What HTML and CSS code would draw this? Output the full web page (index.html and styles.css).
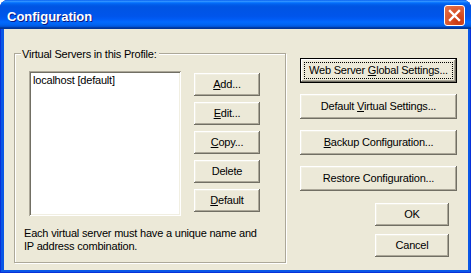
FILE: index.html
```html
<!DOCTYPE html>
<html lang="en">
<head>
    <meta charset="UTF-8">
    <title>Configuration</title>
    <link rel="stylesheet" href="styles.css">
</head>
<body>
    <div class="window">
        <div class="titlebar">
            <span class="title">Configuration</span>
            <button class="close" aria-label="Close">
                <svg width="13" height="13" viewBox="0 0 13 13">
                    <path d="M2 2 L11 11 M11 2 L2 11" stroke="#fff" stroke-width="2.4" stroke-linecap="square"/>
                </svg>
            </button>
        </div>

        <div class="client">
            <div class="group">
                <span class="legend">Virtual Servers in this Profile:</span>
                <div class="group-row">
                    <div class="listbox">
                        <div class="item">localhost [default]</div>
                    </div>
                    <div class="side-buttons">
                        <button class="btn small"><u>A</u>dd...</button>
                        <button class="btn small"><u>E</u>dit...</button>
                        <button class="btn small"><u>C</u>opy...</button>
                        <button class="btn small">Delete</button>
                        <button class="btn small"><u>D</u>efault</button>
                    </div>
                </div>
                <p class="note">Each virtual server must have a unique name and<br>IP address combination.</p>
            </div>

            <div class="actions">
                <div class="main-buttons">
                    <button class="btn wide default"><span class="focus">Web Server <u>G</u>lobal Settings...</span></button>
                    <button class="btn wide">Default <u>V</u>irtual Settings...</button>
                    <button class="btn wide"><u>B</u>ackup Configuration...</button>
                    <button class="btn wide">Restore Configuration...</button>
                </div>
                <div class="dialog-buttons">
                    <button class="btn dlg">OK</button>
                    <button class="btn dlg">Cancel</button>
                </div>
            </div>
        </div>
    </div>
</body>
</html>
```

FILE: styles.css
```css
body {
    margin: 0;
    background: #fff;
    font-family: "Liberation Sans", Arial, sans-serif;
}
.window {
    width: 471px;
    height: 273px;
    background: #0a57e6;
    border-radius: 8px 8px 0 0;
    box-sizing: border-box;
    box-shadow: inset 1px 0 #0831d9, inset -1px 0 #0831d9, inset 0 -1px #0831d9;
    overflow: hidden;
}
.titlebar {
    height: 29px;
    display: flex;
    align-items: flex-start;
    justify-content: space-between;
    padding: 0 6px 0 7px;
    box-sizing: border-box;
    background: linear-gradient(to bottom, #0058ee 0%, #3593ff 4%, #288eff 6%, #127dff 8%, #036ffc 10%, #0262ee 14%, #0057e5 20%, #0054e3 24%, #0055eb 56%, #005bf5 66%, #026afe 76%, #0062ef 86%, #0052d6 92%, #0040ab 94%, #003092 100%);
}
.title {
    color: #fff;
    font-weight: bold;
    font-size: 13px;
    line-height: 15px;
    margin-top: 9px;
    text-shadow: 1px 1px #0a1883;
}
.close {
    width: 21px;
    height: 21px;
    margin-top: 5px;
    padding: 0;
    border: 1px solid #fff;
    border-radius: 3px;
    background: radial-gradient(circle at 70% 80%, #c7350f 0%, #d9542a 45%, #e5764f 100%);
    display: flex;
    align-items: center;
    justify-content: center;
    box-sizing: border-box;
}
.client {
    margin: 0 3px 0 4px;
    height: 241px;
    background: #ece9d8;
    display: flex;
    align-items: flex-start;
    font-size: 11px;
    line-height: 13px;
    letter-spacing: -0.2px;
    color: #000;
}
.group {
    position: relative;
    margin: 24px 0 0 10px;
    width: 272px;
    height: 210px;
    box-sizing: border-box;
    border: 1px solid #aca899;
    box-shadow: inset 1px 1px #fff, 1px 1px #fff;
    padding: 17px 8px 0 8px;
}
.legend {
    position: absolute;
    top: -6px;
    left: 6px;
    padding: 0 2px 0 1px;
    background: #ece9d8;
}
.group-row {
    display: flex;
    align-items: flex-start;
}
.listbox {
    margin-left: 6px;
    width: 152px;
    height: 145px;
    box-sizing: border-box;
    background: #fff;
    padding: 3px 4px;
    box-shadow: inset 1px 1px #aca899, inset -1px -1px #fff, inset 2px 2px #716f64, inset -2px -2px #f1efe2;
}
.side-buttons {
    margin: 2px 0 0 13px;
    display: flex;
    flex-direction: column;
    gap: 6px;
}
.btn {
    background: #ece9d8;
    border: none;
    padding: 0;
    font-family: "Liberation Sans", Arial, sans-serif;
    font-size: 11px;
    line-height: 13px;
    letter-spacing: -0.2px;
    color: #000;
    box-shadow: inset -1px -1px #716f64, inset 1px 1px #fff, inset -2px -2px #aca899, inset 2px 2px #f1efe2;
}
.btn u {
    text-underline-offset: 1px;
}
.small {
    width: 66px;
    height: 23px;
}
.note {
    margin: 11px 0 0 1px;
}
.actions {
    margin: 29px 0 0 14px;
    width: 157px;
    display: flex;
    flex-direction: column;
}
.main-buttons {
    display: flex;
    flex-direction: column;
    gap: 11px;
}
.wide {
    height: 25px;
}
.default {
    box-shadow: inset 0 0 0 1px #000, inset -2px -2px #716f64, inset 2px 2px #fff, inset -3px -3px #aca899, inset 3px 3px #f1efe2;
    padding: 4px;
}
.focus {
    display: block;
    height: 100%;
    box-sizing: border-box;
    border: 1px dotted #000;
    line-height: 13px;
    padding-top: 1px;
}
.dialog-buttons {
    margin: 12px 8px 0 0;
    display: flex;
    flex-direction: column;
    align-items: flex-end;
    gap: 8px;
}
.dlg {
    width: 74px;
    height: 23px;
}
```
